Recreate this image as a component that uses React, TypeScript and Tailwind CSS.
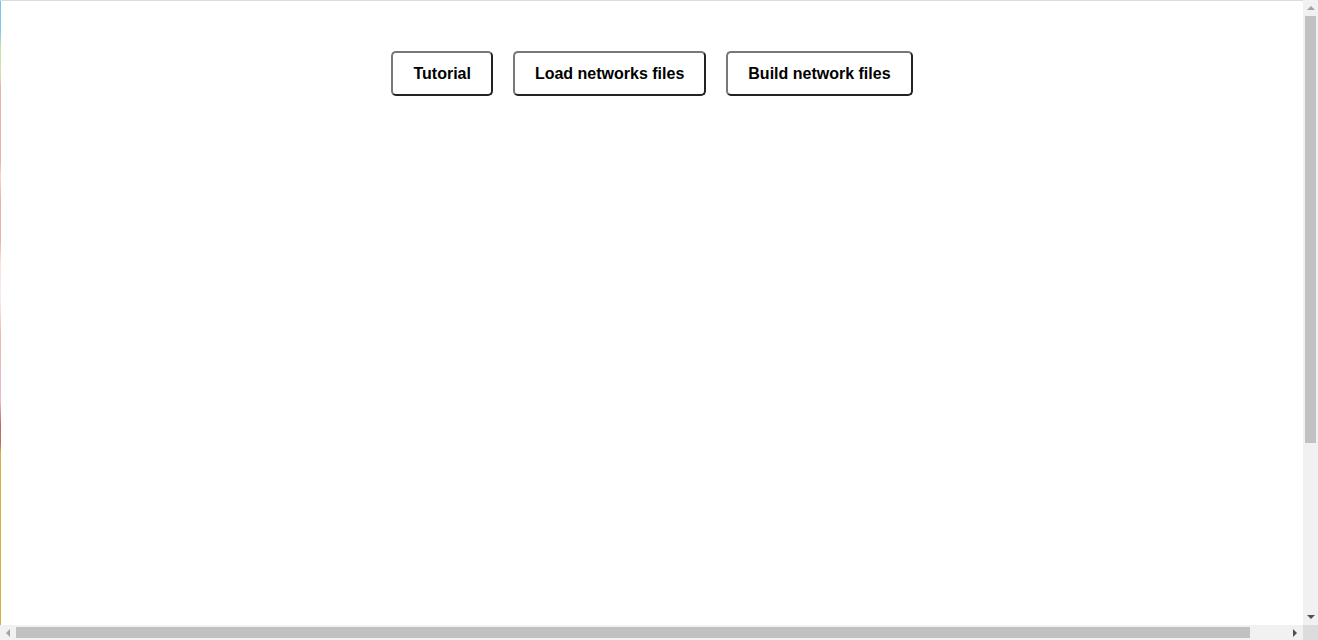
import React from "react";

const buttons = ["Tutorial", "Load networks files", "Build network files"];

function Arrow({ dir, dark }: { dir: "up" | "down" | "left" | "right"; dark?: boolean }) {
    const points = {
        up: "0,4 4,0 8,4",
        down: "0,0 8,0 4,4",
        left: "4,0 4,8 0,4",
        right: "0,0 0,8 4,4",
    }[dir];
    const vertical = dir === "up" || dir === "down";
    return (
        <svg width={vertical ? 8 : 4} height={vertical ? 4 : 8} viewBox={vertical ? "0 0 8 4" : "0 0 4 8"}>
            <polygon points={points} fill={dark ? "#505050" : "#a3a3a3"} />
        </svg>
    );
}

export default function App() {
    return (
        <div className="flex h-[640px] w-[1318px] flex-col overflow-hidden bg-white font-['Liberation_Sans',Arial,sans-serif]">
            <div className="flex min-h-0 flex-1">
                {/* page */}
                <div className="flex flex-1 border-t border-[#dcdcdc]">
                    <div className="w-px bg-[linear-gradient(to_bottom,#74c6ea_0px,#7cc8e8_28px,#c8e2a8_48px,#cfe3ad_74px,#e8b2a8_88px,#e9b3a8_160px,#f8d8c0_176px,#e8b0a6_200px,#e9b4ac_240px,#f6e4dc_262px,#f8ece6_298px,#e8b8b4_335px,#e8bcc4_400px,#c06868_424px,#c26a60_442px,#d8b048_452px,#d8b048_625px)]" />
                    <div className="flex flex-1 flex-col items-center">
                        <div className="mt-[50px] flex gap-5">
                            {buttons.map((label) => (
                                <button
                                    key={label}
                                    className="h-[45px] rounded-[5px] border-2 border-t-[#787878] border-l-[#787878] border-r-[#232323] border-b-[#232323] bg-white px-5 text-base font-bold text-black"
                                >
                                    {label}
                                </button>
                            ))}
                        </div>
                    </div>
                </div>

                {/* vertical scrollbar */}
                <div className="flex w-[15px] flex-col items-center bg-[#f1f1f1]">
                    <div className="flex h-[16px] items-center justify-center">
                        <Arrow dir="up" />
                    </div>
                    <div className="h-[427px] w-[11px] bg-[#c1c1c1]" />
                    <div className="flex-1" />
                    <div className="flex h-[16px] items-center justify-center">
                        <Arrow dir="down" dark />
                    </div>
                </div>
            </div>

            {/* horizontal scrollbar */}
            <div className="flex h-[15px]">
                <div className="flex flex-1 items-center bg-[#f1f1f1]">
                    <div className="flex w-[16px] items-center justify-center">
                        <Arrow dir="left" />
                    </div>
                    <div className="h-[11px] w-[1234px] bg-[#c1c1c1]" />
                    <div className="flex-1" />
                    <div className="flex w-[16px] items-center justify-center">
                        <Arrow dir="right" dark />
                    </div>
                </div>
                <div className="w-[15px] bg-[#dcdcdc]" />
            </div>
        </div>
    );
}
